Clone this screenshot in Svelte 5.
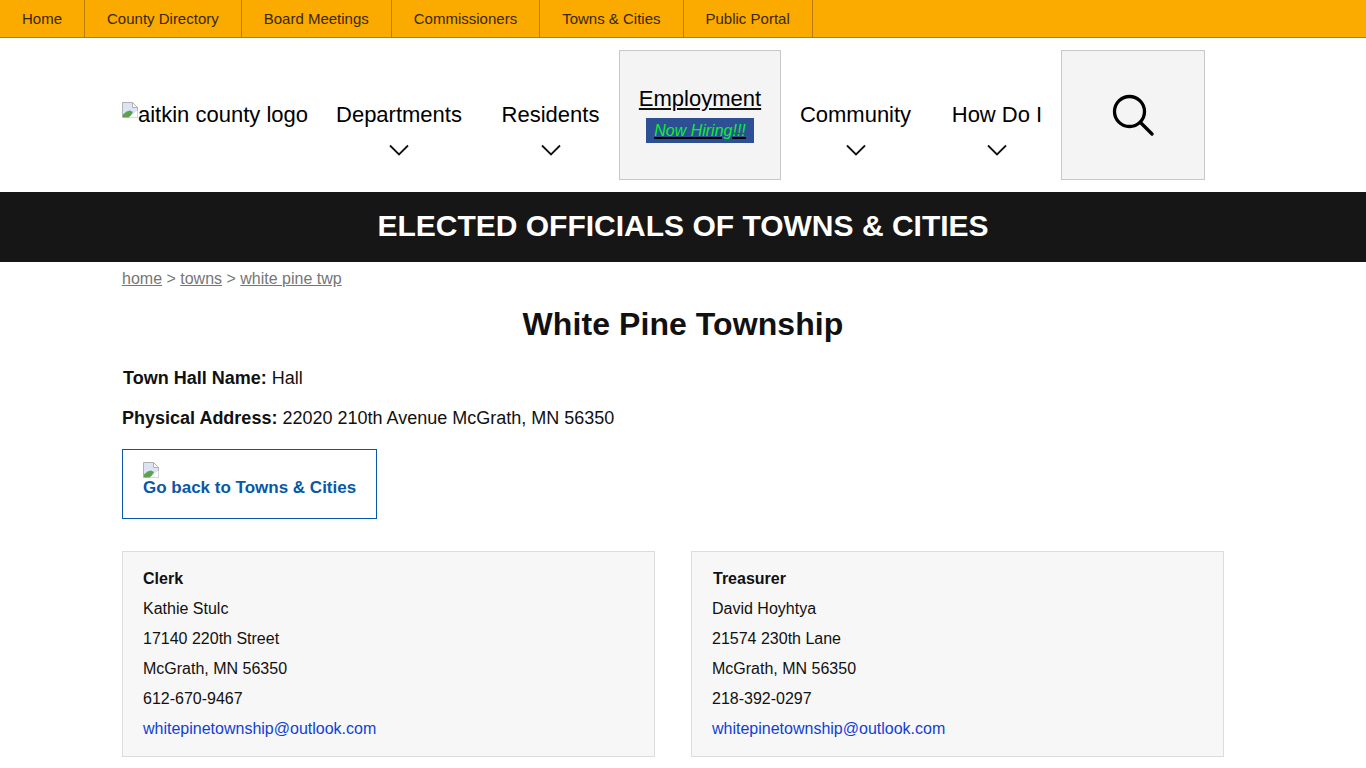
<script>
  const top = ['Home', 'County Directory', 'Board Meetings', 'Commissioners', 'Towns & Cities', 'Public Portal'];
  const cards = [
    { role: 'Clerk', name: 'Kathie Stulc', street: '17140 220th Street', city: 'McGrath, MN 56350', phone: '612-670-9467' },
    { role: 'Treasurer', name: 'David Hoyhtya', street: '21574 230th Lane', city: 'McGrath, MN 56350', phone: '218-392-0297' }
  ];
</script>

{#snippet broken()}
  <svg class="broken" width="16" height="16" viewBox="0 0 16 16" aria-hidden="true">
    <path d="M.5.5H10.500L15.500 5.500V15.500H.5Z" fill="#dbe3f5" stroke="#aeb2b0" />
    <path d="M10.500.5V5.500H15.500Z" fill="#fff" stroke="#aeb2b0" />
    <path d="M1 15V12.500L4.500 9.500L8 8.500L11 10L8 15Z" fill="#5da04d" />
    <path d="M6.500 15.500L15.500 8.500V15.500Z" fill="#fff" />
  </svg>
{/snippet}

{#snippet chevron()}
  <svg class="chev" width="20" height="12" viewBox="0 0 20 12" aria-hidden="true">
    <path d="M1 1.500L10 10.500L19 1.500" fill="none" stroke="#111" stroke-width="1.800" />
  </svg>
{/snippet}

<div class="page">
  <nav class="topbar">
    {#each top as t}
      <a href="#top">{t}</a>
    {/each}
  </nav>

  <header class="mainnav">
    <a class="logo" href="#logo">{@render broken()}aitkin county logo</a>
    <a class="item dept" href="#d"><span>Departments</span>{@render chevron()}</a>
    <a class="item res" href="#r"><span>Residents</span>{@render chevron()}</a>
    <a class="boxed emp" href="#e">
      <span class="emptext">Employment</span>
      <span class="hiring"><em>Now Hiring!!!</em></span>
    </a>
    <a class="item com" href="#c"><span>Community</span>{@render chevron()}</a>
    <a class="item how" href="#h"><span>How Do I</span>{@render chevron()}</a>
    <button class="boxed search" aria-label="Search">
      <svg width="42" height="42" viewBox="0 0 42 42" aria-hidden="true">
        <circle cx="17.500" cy="17.500" r="15" fill="none" stroke="#000" stroke-width="3.300" />
        <path d="M28.500 28.500L40 40" fill="none" stroke="#000" stroke-width="3.300" stroke-linecap="round" />
      </svg>
    </button>
  </header>

  <div class="banner">ELECTED OFFICIALS OF TOWNS &amp; CITIES</div>

  <main class="content">
    <div class="crumbs"><a href="#home">home</a> &gt; <a href="#towns">towns</a> &gt; <a href="#twp">white pine twp</a></div>
    <h1>White Pine Township</h1>
    <p class="hall"><b>Town Hall Name:</b> Hall</p>
    <p class="addr"><b>Physical Address:</b> 22020 210th Avenue McGrath, MN 56350</p>
    <a class="back" href="#towns">{@render broken()}<br />Go back to Towns &amp; Cities</a>

    <div class="cards">
      {#each cards as c, i}
        <section class="card">
          <div class="role" class:shift={i === 1}>{c.role}</div>
          <div>{c.name}</div>
          <div>{c.street}</div>
          <div>{c.city}</div>
          <div>{c.phone}</div>
          <div><a href="#mail">whitepinetownship@outlook.com</a></div>
        </section>
      {/each}
    </div>
  </main>
</div>

<style>
  :global(body) {
    margin: 0;
    background: #fff;
    font-family: "Liberation Sans", Arial, sans-serif;
    color: #111;
  }
  .page {
    height: 768px;
    overflow: hidden;
  }
  a {
    color: inherit;
    text-decoration: none;
  }
  .topbar {
    display: flex;
    height: 37px;
    background: #fbaa00;
    border-bottom: 1px solid #b77c00;
  }
  .topbar a {
    padding: 1px 22px 0;
    font-size: 15px;
    line-height: 36px;
    color: #3a2800;
    border-right: 1px solid #b77c00;
  }
  .mainnav {
    display: flex;
    align-items: center;
    height: 154px;
    padding-left: 122px;
  }
  .logo {
    display: inline-flex;
    align-items: center;
    width: 186px;
    margin-right: 8px;
    font-size: 22px;
    color: #000;
    white-space: nowrap;
  }
  .logo .broken {
    align-self: flex-start;
  }
  .item {
    display: flex;
    flex-direction: column;
    align-items: center;
    padding-top: 28px;
    font-size: 22px;
    line-height: 26px;
    color: #000;
    gap: 16px;
  }
  .dept { width: 166px; }
  .res { width: 137px; }
  .com { width: 151px; margin-left: -1px; margin-right: 1px; }
  .how { width: 130px; }
  .boxed {
    box-sizing: border-box;
    height: 130px;
    background: #f4f4f4;
    border: 1px solid #c8c8c8;
    display: flex;
    flex-direction: column;
    align-items: center;
    justify-content: center;
  }
  .emp {
    width: 162px;
    padding-bottom: 2px;
    font-size: 22px;
    text-decoration: underline;
  }
  .emptext {
    line-height: 26px;
    color: #000;
  }
  .hiring {
    margin-top: 6px;
    padding: 0 8px;
    background: #2d4f93;
    color: #0bf030;
    font-size: 16px;
    line-height: 25px;
    text-decoration: underline;
    text-decoration-color: #000;
    text-decoration-thickness: 2px;
  }
  .search {
    width: 144px;
    margin-left: -1px;
    padding: 0;
    flex-shrink: 0;
  }
  .banner {
    height: 70px;
    line-height: 68px;
    background: #161616;
    color: #fff;
    text-align: center;
    font-size: 30px;
    font-weight: 700;
  }
  .content {
    padding: 6px 142px 0 122px;
    font-size: 18px;
  }
  .crumbs {
    font-size: 16px;
    line-height: 22px;
    color: #767676;
  }
  .crumbs a {
    text-decoration: underline;
  }
  h1 {
    width: 1122px;
    margin: 16px 0 0;
    text-align: center;
    font-size: 32px;
    line-height: 37px;
    letter-spacing: 0.080px;
  }
  p {
    margin: 0;
    line-height: 24px;
  }
  .hall {
    margin-top: 23px;
    padding-left: 1px;
  }
  .addr {
    margin-top: 16px;
  }
  .back {
    display: inline-block;
    box-sizing: border-box;
    width: 255px;
    height: 70px;
    margin-top: 19px;
    padding: 12px 20px 0;
    border: 1px solid #0a57a8;
    color: #0a57a8;
    font-size: 17px;
    font-weight: 700;
    line-height: 17px;
    white-space: nowrap;
  }
  .back .broken {
    display: inline-block;
    vertical-align: top;
  }
  .cards {
    display: grid;
    grid-template-columns: 533px 533px;
    column-gap: 36px;
    margin-top: 32px;
  }
  .card {
    box-sizing: border-box;
    height: 206px;
    padding: 12px 20px;
    background: #f7f7f7;
    border: 1px solid #dcdcdc;
    font-size: 16px;
    line-height: 30px;
  }
  .role {
    font-weight: 700;
  }
  .shift {
    padding-left: 1px;
  }
  .card a {
    color: #0f3fd6;
  }
</style>
